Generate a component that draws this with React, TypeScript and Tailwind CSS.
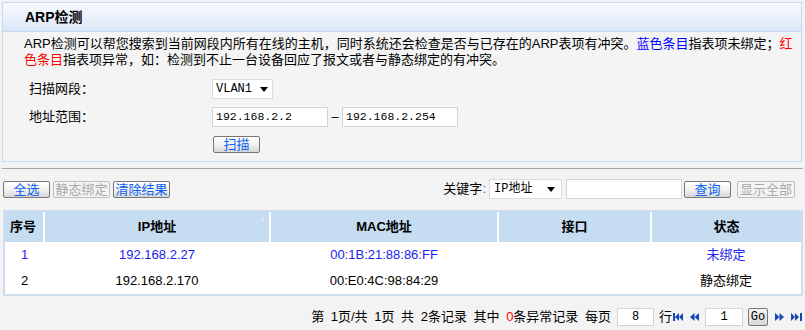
import React from "react";

const F = { fontFamily: '"Liberation Sans", "Noto Sans CJK SC", sans-serif' };
const MONO = { fontFamily: '"Liberation Mono", "Noto Sans CJK SC", monospace' };

function Btn({ children, disabled, w }: { children: React.ReactNode; disabled?: boolean; w: string }) {
  return (
    <div
      className={`${w} h-[17px] flex items-center justify-center rounded-[2px] border text-[13px] leading-none ${
        disabled
          ? "border-[#bdbdbd] text-[#a8a8a8] bg-[#f4f4f4]"
          : "border-[#777] text-[#0a62f0] bg-[linear-gradient(#ffffff,#f2f2f2_50%,#d6d6d6)]"
      }`}
    >
      {children}
    </div>
  );
}

function FirstIcon() {
  return (
    <svg width="11" height="10" viewBox="0 0 11 10">
      <rect x="0" y="1" width="2" height="8" fill="#1446b4" />
      <polygon points="6,1 6,9 2,5" fill="#1446b4" />
      <polygon points="10,1 10,9 6,5" fill="#1446b4" />
    </svg>
  );
}
function PrevIcon() {
  return (
    <svg width="9" height="10" viewBox="0 0 9 10">
      <polygon points="4.5,1 4.5,9 0,5" fill="#1446b4" />
      <polygon points="9,1 9,9 4.5,5" fill="#1446b4" />
    </svg>
  );
}
function NextIcon() {
  return (
    <svg width="9" height="10" viewBox="0 0 9 10">
      <polygon points="0,1 0,9 4.5,5" fill="#1446b4" />
      <polygon points="4.5,1 4.5,9 9,5" fill="#1446b4" />
    </svg>
  );
}
function LastIcon() {
  return (
    <svg width="11" height="10" viewBox="0 0 11 10">
      <polygon points="0,1 0,9 4,5" fill="#1446b4" />
      <polygon points="4,1 4,9 8,5" fill="#1446b4" />
      <rect x="9" y="1" width="2" height="8" fill="#1446b4" />
    </svg>
  );
}

function Caret() {
  return (
    <svg width="8" height="5" viewBox="0 0 8 5">
      <polygon points="0,0 8,0 4,5" fill="#000" />
    </svg>
  );
}

export default function App() {
  return (
    <div className="w-[805px] h-[330px] bg-[#f3f3f3] overflow-hidden text-black" style={F}>
      {/* Top panel */}
      <div className="ml-[2px] mr-[3px] mt-[2px] border border-[#c5d9f0] bg-[#f4f4f4]">
        <div className="h-[29px] border-b border-[#c5d9f0] bg-[linear-gradient(#f6f9fe,#e9f0fb_55%,#d9e6f7)] flex items-center pl-[22px]">
          <span className="text-[14px] font-bold leading-none">ARP检测</span>
        </div>
        <p className="pl-[21px] pr-[8px] pt-[4px] text-[13px] leading-[16px]">
          ARP检测可以帮您搜索到当前网段内所有在线的主机，同时系统还会检查是否与已存在的ARP表项有冲突。<span className="text-[#0000ff]">蓝色条目</span>指表项未绑定；<span className="text-[#ff0000]">红色条目</span>指表项异常，如：检测到不止一台设备回应了报文或者与静态绑定的有冲突。
        </p>
        <div className="mt-[11px] flex flex-col gap-[8px] pb-[8px]">
          <div className="flex items-center h-[20px]">
            <span className="w-[209px] pl-[26px] text-[13px]">扫描网段：</span>
            <div className="w-[61px] h-[20px] bg-white border border-[#dcdcdc] flex items-center justify-between pl-[3px] pr-[4px] text-[12px]" style={MONO}>
              <span>VLAN1</span>
              <Caret />
            </div>
          </div>
          <div className="flex items-center h-[20px]">
            <span className="w-[209px] pl-[26px] text-[13px]">地址范围：</span>
            <div className="w-[116px] h-[20px] bg-white border border-[#d4d4d4] flex items-center pl-[3px] text-[11.5px]" style={MONO}>192.168.2.2</div>
            <span className="w-[14px] text-center text-[13px]">–</span>
            <div className="w-[116px] h-[20px] bg-white border border-[#d4d4d4] flex items-center pl-[3px] text-[11.5px]" style={MONO}>192.168.2.254</div>
          </div>
          <div className="flex items-center h-[18px] pl-[210px]">
            <Btn w="w-[47px]">扫描</Btn>
          </div>
        </div>
      </div>

      {/* Separator */}
      <div className="mt-[6px] ml-[2px] mr-[2px] border-t border-[#a6a6a6]" />

      {/* Toolbar */}
      <div className="mt-[10px] flex items-center h-[20px] pl-[3px] pr-[10px]">
        <div className="flex gap-[3px]">
          <Btn w="w-[47px]">全选</Btn>
          <Btn w="w-[57px]" disabled>静态绑定</Btn>
          <Btn w="w-[57px]">清除结果</Btn>
        </div>
        <div className="ml-auto flex items-center">
          <span className="text-[13px] mr-[3px]">关键字<span className="text-[#2a6bd8]">:</span></span>
          <div className="w-[73px] h-[20px] bg-white border border-[#dcdcdc] flex items-center justify-between pl-[4px] pr-[6px] text-[12px]">
            <span style={MONO}>IP地址</span>
            <Caret />
          </div>
          <div className="ml-[4px] w-[116px] h-[20px] bg-white border border-[#d4d4d4]" />
          <div className="ml-[2px]"><Btn w="w-[47px]">查询</Btn></div>
          <div className="ml-[6px]"><Btn w="w-[58px]" disabled>显示全部</Btn></div>
        </div>
      </div>

      {/* Table */}
      <div className="mt-[11px] ml-[3px] mr-[2px] border-2 border-[#cfdeee] bg-white">
        <table className="w-full border-collapse table-fixed text-[13px]">
          <colgroup>
            <col className="w-[39px]" />
            <col className="w-[226px]" />
            <col className="w-[228px]" />
            <col className="w-[153px]" />
            <col />
          </colgroup>
          <thead>
            <tr className="h-[30px] bg-[#c6dcf1]">
              <th className="font-bold text-left pl-[5px] border-r-2 border-white">序号</th>
              <th className="font-bold text-center border-r-2 border-white relative">
                IP地址
                <span className="absolute right-[4px] top-[2px] text-[9px] text-white leading-none">↓</span>
              </th>
              <th className="font-bold text-center border-r-2 border-white">MAC地址</th>
              <th className="font-bold text-center border-r-2 border-white">接口</th>
              <th className="font-bold text-center">状态</th>
            </tr>
          </thead>
          <tbody>
            <tr className="h-[26px] text-[#2222ee]">
              <td className="text-center">1</td>
              <td className="text-center">192.168.2.27</td>
              <td className="text-center">00:1B:21:88:86:FF</td>
              <td />
              <td className="text-center">未绑定</td>
            </tr>
            <tr className="h-[26px]">
              <td className="text-center">2</td>
              <td className="text-center">192.168.2.170</td>
              <td className="text-center">00:E0:4C:98:84:29</td>
              <td />
              <td className="text-center">静态绑定</td>
            </tr>
          </tbody>
        </table>
      </div>

      {/* Pagination */}
      <div className="mt-[11px] flex items-center justify-end pr-[3px] text-[13px] h-[19px]">
        <span className="whitespace-pre [word-spacing:3px]">第 1页/共 1页 共 2条记录 其中 <span className="text-[#ff0000]">0</span>条异常记录 每页</span>
        <div className="ml-[6px] w-[37px] h-[18px] bg-white border border-[#d4d4d4] flex items-center justify-center text-[12px]" style={MONO}>8</div>
        <span className="ml-[5px]">行</span>
        <div className="ml-[1px]"><FirstIcon /></div>
        <div className="ml-[6px]"><PrevIcon /></div>
        <div className="ml-[6px] w-[38px] h-[18px] bg-white border border-[#d4d4d4] flex items-center justify-center text-[12px]" style={MONO}>1</div>
        <div className="ml-[5px] w-[20px] h-[18px] rounded-[2px] border border-[#777] bg-[linear-gradient(#f4f4f4,#d8d8d8)] flex items-center justify-center text-[12px]" style={MONO}>Go</div>
        <div className="ml-[7px]"><NextIcon /></div>
        <div className="ml-[7px]"><LastIcon /></div>
      </div>
    </div>
  );
}
